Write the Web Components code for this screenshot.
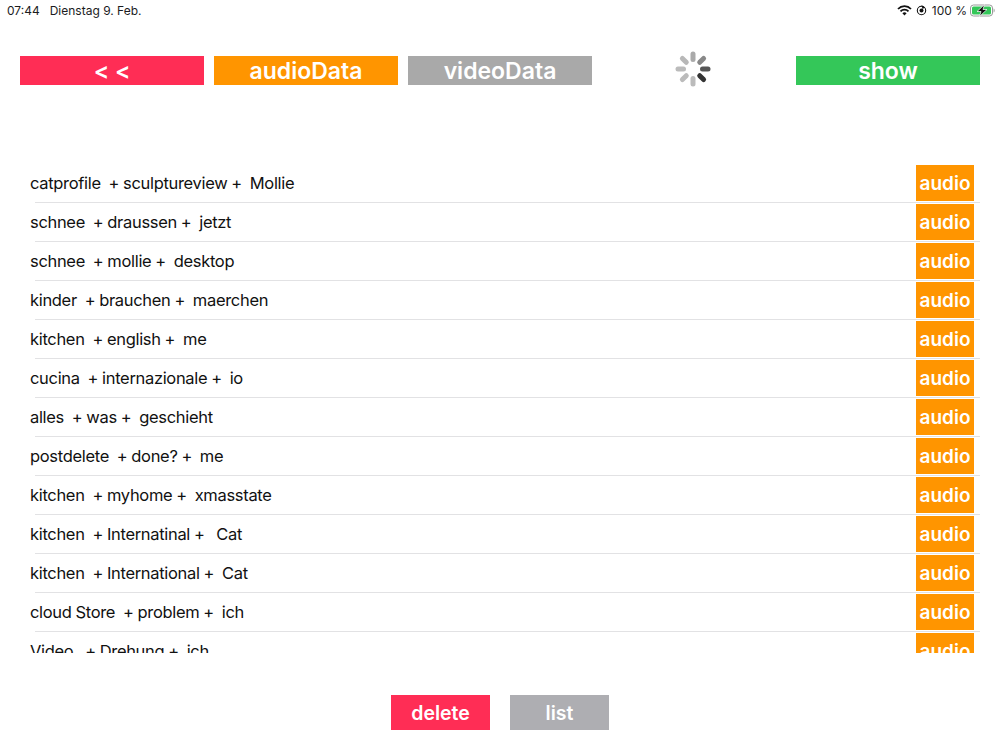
<!DOCTYPE html>
<html>
<head>
<meta charset="utf-8">
<title>audio list</title>
<style>
    html, body { margin: 0; padding: 0; background: #fff; }
    body { width: 1000px; height: 750px; overflow: hidden; font-family: Inter, "Liberation Sans", sans-serif; }
</style>
</head>
<body>
<app-screen></app-screen>
<script>
class StatusBar extends HTMLElement {
    constructor() {
        super()
        this.attachShadow({ mode: 'open' });
        this.shadowRoot.innerHTML = `
            <style>
                :host {
                    display: flex;
                    align-items: center;
                    height: 20px;
                    padding: 0 4px 0 7px;
                    font-size: 12px;
                    color: #1c1c1e;
                }
                .date { margin-left: 10px; }
                .right { margin-left: auto; display: flex; align-items: center; }
                .right span { margin: 0 3px 0 5px; font-size: 12px; }
                svg { display: block; }
            </style>
            <span>07:44</span>
            <span class="date">Dienstag 9. Feb.</span>
            <div class="right">
                <svg width="15" height="11" viewBox="0 0 15 11">
                    <path d="M1 4 A9 9 0 0 1 14 4" fill="none" stroke="#111" stroke-width="1.8"/>
                    <path d="M3.5 6.3 A5.6 5.6 0 0 1 11.5 6.3" fill="none" stroke="#111" stroke-width="1.8"/>
                    <path d="M5.4 8.2 A3 3 0 0 1 9.6 8.2 L7.5 10.6 Z" fill="#111"/>
                </svg>
                <svg width="11" height="11" viewBox="0 0 11 11" style="margin-left:4px">
                    <circle cx="5.5" cy="5.5" r="4.2" fill="none" stroke="#111" stroke-width="1.1"/>
                    <circle cx="5.5" cy="5.5" r="2" fill="#111"/>
                    <path d="M5.5 0 L9 2.5 L6.5 4 Z" fill="#111"/>
                </svg>
                <span>100 %</span>
                <svg width="26" height="13" viewBox="0 0 26 13">
                    <rect x="0.5" y="1" width="22" height="11" rx="3" fill="none" stroke="#9a9a9a"/>
                    <rect x="2" y="2.5" width="19" height="8" rx="1.5" fill="#34c759"/>
                    <path d="M23.6 4.5 C25 4.9 25 8.1 23.6 8.5 Z" fill="#9a9a9a"/>
                    <path d="M14.5 0.5 L7 7.5 L11 7.5 L9.5 12.5 L17 5.5 L13 5.5 Z" fill="#111" stroke="#fff" stroke-width="0.7"/>
                </svg>
            </div>
        `
    }
}

class BlockButton extends HTMLElement {
    constructor() {
        super()
        this.attachShadow({ mode: 'open' });
        this.shadowRoot.innerHTML = `
            <style>
                :host {
                    display: flex;
                    align-items: center;
                    justify-content: center;
                    background: var(--btn-color, #ff9500);
                    color: #fff;
                    font-weight: 600;
                    font-size: var(--btn-size, 23px);
                    height: var(--btn-height, 29px);
                    width: var(--btn-width, 184px);
                    flex: none;
                }
            </style>
            <slot></slot>
        `
    }

    connectedCallback() {
        if (this.hasAttribute('color')) {
            this.style.setProperty('--btn-color', this.getAttribute('color'));
        }
    }
}

class LoadSpinner extends HTMLElement {
    constructor() {
        super()
        this.attachShadow({ mode: 'open' });
        const shades = ['#555555', '#333333', '#bbbbbb', '#bbbbbb', '#bbbbbb', '#b8b8b8', '#aaaaaa', '#888888'];
        let spokes = '';
        // first spoke points right, going round clockwise
        shades.forEach((c, i) => {
            spokes += `<rect x="7" y="-2.5" width="10.5" height="5" rx="2.5" fill="${c}" transform="rotate(${i * 45})"/>`;
        });
        this.shadowRoot.innerHTML = `
            <style>
                :host { display: flex; align-items: center; justify-content: center; width: 184px; height: 29px; flex: none; }
                svg { display: block; flex: none; margin: -5px 3px -2px 0; }
            </style>
            <svg width="36" height="36" viewBox="-18 -18 36 36">${spokes}</svg>
        `
    }
}

class AudioRow extends HTMLElement {
    constructor() {
        super()
        this.attachShadow({ mode: 'open' });
        this.shadowRoot.innerHTML = `
            <style>
                :host {
                    display: block;
                    height: 39px;
                    box-sizing: border-box;
                    font-size: 16.5px;
                    color: #111;
                }
                .line {
                    display: flex;
                    align-items: center;
                    justify-content: space-between;
                    height: 39px;
                    box-sizing: border-box;
                    padding: 1px 6px 2px 10px;
                }
                .label { white-space: pre; letter-spacing: -0.32px; word-spacing: -0.4px; }
                .sep { height: 1px; background: #e2e2e4; margin: -1px 0 0 15px; }
                block-button {
                    --btn-size: 19px;
                    --btn-height: 36px;
                    --btn-width: 58px;
                }
            </style>
            <div class="line">
                <span class="label"><slot></slot></span>
                <block-button>audio</block-button>
            </div>
            <div class="sep"></div>
        `
    }
}

class AudioList extends HTMLElement {
    constructor() {
        super()
        this.attachShadow({ mode: 'open' });
        this.shadowRoot.innerHTML = `
            <style>
                :host {
                    display: block;
                    height: 489px;
                    margin: 79px 20px 0;
                    overflow: hidden;
                }
            </style>
            <slot></slot>
        `
    }
}

class AppScreen extends HTMLElement {
    constructor() {
        super()
        this.attachShadow({ mode: 'open' });
        const rows = [
            'catprofile  + sculptureview +  Mollie',
            'schnee  + draussen +  jetzt',
            'schnee  + mollie +  desktop',
            'kinder  + brauchen +  maerchen',
            'kitchen  + english +  me',
            'cucina  + internazionale +  io',
            'alles  + was +  geschieht',
            'postdelete  + done? +  me',
            'kitchen  + myhome +  xmasstate',
            'kitchen  + Internatinal +   Cat',
            'kitchen  + International +  Cat',
            'cloud Store  + problem +  ich',
            'Video   + Drehung +  ich'
        ];
        this.shadowRoot.innerHTML = `
            <style>
                :host { display: block; width: 1000px; height: 750px; }
                .top { display: flex; gap: 10px; margin: 36px 20px 0; }
                .bottom {
                    display: flex;
                    justify-content: center;
                    gap: 20px;
                    margin-top: 42px;
                    --btn-width: 99px;
                    --btn-height: 35px;
                    --btn-size: 19.5px;
                }
            </style>
            <status-bar></status-bar>
            <div class="top">
                <block-button color="#ff2d55">&lt; &lt;</block-button>
                <block-button color="#ff9500">audioData</block-button>
                <block-button color="#a9a9a9">videoData</block-button>
                <load-spinner></load-spinner>
                <block-button color="#34c759">show</block-button>
            </div>
            <audio-list>
                ${rows.map(r => `<audio-row>${r}</audio-row>`).join('')}
            </audio-list>
            <div class="bottom">
                <block-button color="#ff2d55">delete</block-button>
                <block-button color="#aeaeb2">list</block-button>
            </div>
        `
    }
}

customElements.define('status-bar', StatusBar);
customElements.define('block-button', BlockButton);
customElements.define('load-spinner', LoadSpinner);
customElements.define('audio-row', AudioRow);
customElements.define('audio-list', AudioList);
customElements.define('app-screen', AppScreen);
</script>
</body>
</html>
